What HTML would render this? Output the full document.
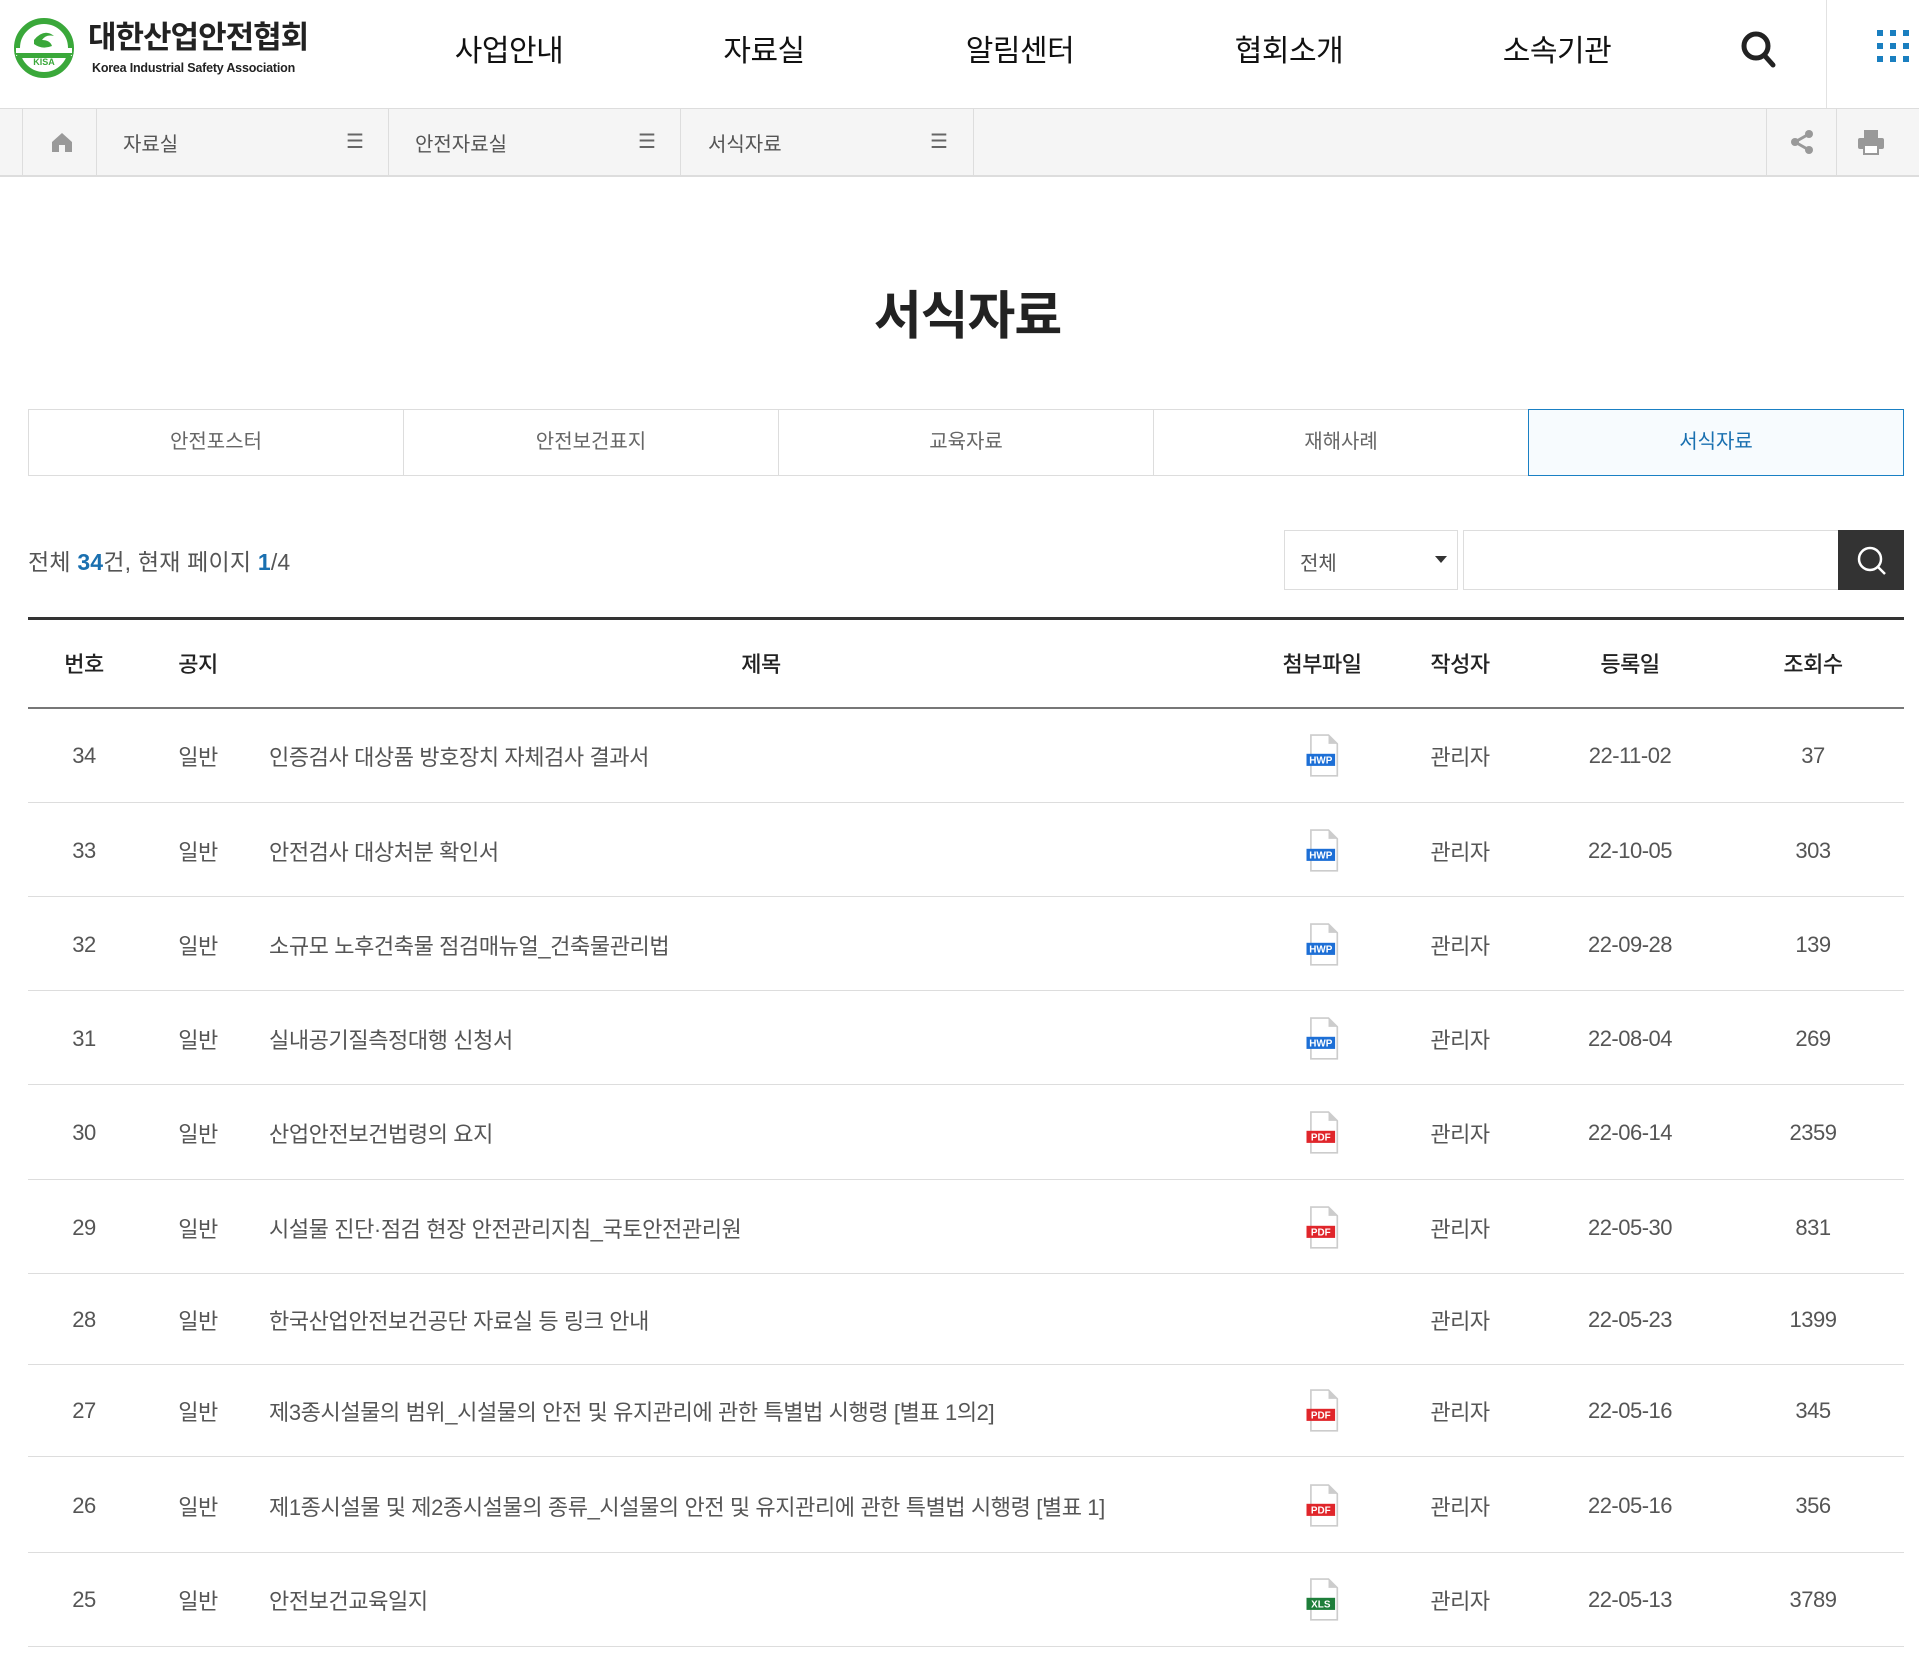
<!DOCTYPE html>
<html><head><meta charset="utf-8">
<style>
*{margin:0;padding:0;box-sizing:border-box}
body{width:1919px;height:1658px;background:#fff;font-family:"Liberation Sans","Noto Sans CJK KR",sans-serif;position:relative;overflow:hidden;color:#333}
.a{position:absolute}
.nav{font-size:30px;color:#111;top:26px;transform:translateX(-50%);letter-spacing:-0.5px}
.bc{top:108px;left:0;width:1919px;height:69px;background:#f5f5f5;border-top:1px solid #ddd;border-bottom:2px solid #ddd}
.vl{position:absolute;top:0;width:1px;height:67px;background:#ddd}
.bct{position:absolute;top:19px;font-size:20px;color:#555}
.ham{position:absolute;top:20px;font-size:20px;color:#666}
.tab{position:absolute;top:409px;height:67px;border:1px solid #ddd;font-size:20px;color:#666;text-align:center;line-height:65px;background:#fff}
.c{position:absolute;transform:translate(-50%,-50%);font-size:22px;color:#555;white-space:nowrap;letter-spacing:-0.5px}
.h{color:#222;font-weight:500}
.t{position:absolute;transform:translateY(-50%);left:269px;font-size:22px;color:#555;white-space:nowrap;letter-spacing:-0.4px}
.rl{position:absolute;left:28px;width:1876px;height:1px;background:#ddd}
.ic{position:absolute;width:38px;height:44px;transform:translate(-50%,-50%)}
</style></head><body>
<svg class="a" style="left:12px;top:16px" width="64" height="64" viewBox="0 0 64 64">
<circle cx="32" cy="32" r="27" fill="none" stroke="#3aa83a" stroke-width="6"/>
<path d="M4 36 H60" stroke="#fff" stroke-width="8"/>
<path d="M2 37 L62 37 L56 42 L8 42Z" fill="#3aa83a"/>
<text x="32" y="49" font-size="9" font-weight="bold" fill="#3aa83a" text-anchor="middle" font-family="Liberation Sans">KISA</text>
<path d="M22 24 Q32 12 42 20 Q34 18 30 24 Q38 24 40 30 Q30 34 22 28Z" fill="#3aa83a"/>
</svg>
<div class="a" style="left:88px;top:20px;font-size:31px;font-weight:bold;color:#222;letter-spacing:-1px;line-height:36px">대한산업안전협회</div>
<div class="a" style="left:92px;top:61px;font-size:12.5px;font-weight:bold;color:#222;letter-spacing:-0.2px">Korea Industrial Safety Association</div>
<div class="a nav" style="left:509px">사업안내</div>
<div class="a nav" style="left:764px">자료실</div>
<div class="a nav" style="left:1020px">알림센터</div>
<div class="a nav" style="left:1289px">협회소개</div>
<div class="a nav" style="left:1557px">소속기관</div>
<svg class="a" style="left:1740px;top:30px" width="38" height="40" viewBox="0 0 38 40"><circle cx="16" cy="16" r="12" fill="none" stroke="#222" stroke-width="5"/><path d="M25 26 L33 35" stroke="#222" stroke-width="5" stroke-linecap="round"/></svg>
<div class="a" style="left:1826px;top:0;width:1px;height:108px;background:#e2e2e2"></div>
<svg class="a" style="left:1877px;top:30px" width="34" height="34" viewBox="0 0 34 34" fill="#1a7fc0">
<rect x="0" y="0" width="6" height="6"/><rect x="13" y="0" width="6" height="6"/><rect x="26" y="0" width="6" height="6"/>
<rect x="0" y="13" width="6" height="6"/><rect x="13" y="13" width="6" height="6"/><rect x="26" y="13" width="6" height="6"/>
<rect x="0" y="26" width="6" height="6"/><rect x="13" y="26" width="6" height="6"/><rect x="26" y="26" width="6" height="6"/></svg>
<div class="a bc">
<div class="vl" style="left:22px"></div><div class="vl" style="left:96px"></div><div class="vl" style="left:388px"></div><div class="vl" style="left:680px"></div><div class="vl" style="left:973px"></div>
<div class="vl" style="left:1766px"></div><div class="vl" style="left:1836px"></div>
<svg style="position:absolute;left:51px;top:23px" width="22" height="20" viewBox="0 0 22 20"><path d="M11 1 L21 10 V20 H14 V13 H8 V20 H1 V10Z" fill="#999"/></svg>
<div class="bct" style="left:123px">자료실</div><div class="ham" style="left:346px">☰</div>
<div class="bct" style="left:415px">안전자료실</div><div class="ham" style="left:638px">☰</div>
<div class="bct" style="left:708px">서식자료</div><div class="ham" style="left:930px">☰</div>
<svg style="position:absolute;left:1789px;top:20px" width="26" height="26" viewBox="0 0 26 26" fill="#999"><circle cx="20" cy="5" r="4"/><circle cx="6" cy="13" r="4"/><circle cx="20" cy="21" r="4"/><path d="M6 13 L20 5 M6 13 L20 21" stroke="#999" stroke-width="3"/></svg>
<svg style="position:absolute;left:1857px;top:20px" width="28" height="26" viewBox="0 0 28 26" fill="#999"><rect x="7" y="1" width="14" height="8"/><rect x="1" y="9" width="26" height="11" rx="2"/><rect x="7" y="16" width="14" height="9" fill="#fff" stroke="#999" stroke-width="2"/></svg>
</div>
<div class="a" style="left:8px;width:1919px;top:274px;text-align:center;font-size:52px;font-weight:bold;color:#222;letter-spacing:-1px">서식자료</div>
<div class="tab" style="left:28px;width:376px">안전포스터</div>
<div class="tab" style="left:403px;width:376px">안전보건표지</div>
<div class="tab" style="left:778px;width:376px">교육자료</div>
<div class="tab" style="left:1153px;width:376px">재해사례</div>
<div class="tab" style="left:1528px;width:376px;border-color:#1a80c4;color:#1a70b0;background:#f7fbfe">서식자료</div>
<div class="a" style="left:28px;top:543px;font-size:23px;color:#555;letter-spacing:0.2px">전체 <b style="color:#1a70b0">34</b>건, 현재 페이지 <b style="color:#1a70b0">1</b>/4</div>
<div class="a" style="left:1284px;top:530px;width:174px;height:60px;border:1px solid #ddd"><span style="position:absolute;left:15px;top:16px;font-size:20px;color:#555">전체</span><span style="position:absolute;right:10px;top:25px;border-left:6px solid transparent;border-right:6px solid transparent;border-top:7px solid #333"></span></div>
<div class="a" style="left:1463px;top:530px;width:376px;height:60px;border:1px solid #ddd"></div>
<div class="a" style="left:1838px;top:530px;width:66px;height:60px;background:#333"><svg style="position:absolute;left:18px;top:15px" width="32" height="32" viewBox="0 0 32 32"><circle cx="14" cy="14" r="11" fill="none" stroke="#fff" stroke-width="2.5"/><path d="M22 22 L29 29" stroke="#fff" stroke-width="2.5"/></svg></div>
<div class="a" style="left:28px;top:617px;width:1876px;height:3px;background:#333"></div>
<div class="c h" style="left:84px;top:663px">번호</div>
<div class="c h" style="left:198px;top:663px">공지</div>
<div class="c h" style="left:761px;top:663px">제목</div>
<div class="c h" style="left:1322px;top:663px">첨부파일</div>
<div class="c h" style="left:1460px;top:663px">작성자</div>
<div class="c h" style="left:1630px;top:663px">등록일</div>
<div class="c h" style="left:1813px;top:663px">조회수</div>
<div class="a" style="left:28px;top:707px;width:1876px;height:2px;background:#777"></div>
<div class="rl" style="top:802px"></div><div class="rl" style="top:896px"></div><div class="rl" style="top:990px"></div><div class="rl" style="top:1084px"></div><div class="rl" style="top:1179px"></div><div class="rl" style="top:1273px"></div><div class="rl" style="top:1364px"></div><div class="rl" style="top:1456px"></div><div class="rl" style="top:1552px"></div><div class="rl" style="top:1646px"></div>
<div class="c" style="left:84px;top:756px">34</div><div class="c" style="left:198px;top:756px">일반</div><div class="t" style="top:756px">인증검사 대상품 방호장치 자체검사 결과서</div><div class="c" style="left:1460px;top:756px">관리자</div><div class="c" style="left:1630px;top:756px">22-11-02</div><div class="c" style="left:1813px;top:756px">37</div>
<div class="c" style="left:84px;top:851px">33</div><div class="c" style="left:198px;top:851px">일반</div><div class="t" style="top:851px">안전검사 대상처분 확인서</div><div class="c" style="left:1460px;top:851px">관리자</div><div class="c" style="left:1630px;top:851px">22-10-05</div><div class="c" style="left:1813px;top:851px">303</div>
<div class="c" style="left:84px;top:945px">32</div><div class="c" style="left:198px;top:945px">일반</div><div class="t" style="top:945px">소규모 노후건축물 점검매뉴얼_건축물관리법</div><div class="c" style="left:1460px;top:945px">관리자</div><div class="c" style="left:1630px;top:945px">22-09-28</div><div class="c" style="left:1813px;top:945px">139</div>
<div class="c" style="left:84px;top:1039px">31</div><div class="c" style="left:198px;top:1039px">일반</div><div class="t" style="top:1039px">실내공기질측정대행 신청서</div><div class="c" style="left:1460px;top:1039px">관리자</div><div class="c" style="left:1630px;top:1039px">22-08-04</div><div class="c" style="left:1813px;top:1039px">269</div>
<div class="c" style="left:84px;top:1133px">30</div><div class="c" style="left:198px;top:1133px">일반</div><div class="t" style="top:1133px">산업안전보건법령의 요지</div><div class="c" style="left:1460px;top:1133px">관리자</div><div class="c" style="left:1630px;top:1133px">22-06-14</div><div class="c" style="left:1813px;top:1133px">2359</div>
<div class="c" style="left:84px;top:1228px">29</div><div class="c" style="left:198px;top:1228px">일반</div><div class="t" style="top:1228px">시설물 진단·점검 현장 안전관리지침_국토안전관리원</div><div class="c" style="left:1460px;top:1228px">관리자</div><div class="c" style="left:1630px;top:1228px">22-05-30</div><div class="c" style="left:1813px;top:1228px">831</div>
<div class="c" style="left:84px;top:1320px">28</div><div class="c" style="left:198px;top:1320px">일반</div><div class="t" style="top:1320px">한국산업안전보건공단 자료실 등 링크 안내</div><div class="c" style="left:1460px;top:1320px">관리자</div><div class="c" style="left:1630px;top:1320px">22-05-23</div><div class="c" style="left:1813px;top:1320px">1399</div>
<div class="c" style="left:84px;top:1411px">27</div><div class="c" style="left:198px;top:1411px">일반</div><div class="t" style="top:1411px">제3종시설물의 범위_시설물의 안전 및 유지관리에 관한 특별법 시행령 [별표 1의2]</div><div class="c" style="left:1460px;top:1411px">관리자</div><div class="c" style="left:1630px;top:1411px">22-05-16</div><div class="c" style="left:1813px;top:1411px">345</div>
<div class="c" style="left:84px;top:1506px">26</div><div class="c" style="left:198px;top:1506px">일반</div><div class="t" style="top:1506px">제1종시설물 및 제2종시설물의 종류_시설물의 안전 및 유지관리에 관한 특별법 시행령 [별표 1]</div><div class="c" style="left:1460px;top:1506px">관리자</div><div class="c" style="left:1630px;top:1506px">22-05-16</div><div class="c" style="left:1813px;top:1506px">356</div>
<div class="c" style="left:84px;top:1600px">25</div><div class="c" style="left:198px;top:1600px">일반</div><div class="t" style="top:1600px">안전보건교육일지</div><div class="c" style="left:1460px;top:1600px">관리자</div><div class="c" style="left:1630px;top:1600px">22-05-13</div><div class="c" style="left:1813px;top:1600px">3789</div>
<svg width="0" height="0" style="position:absolute"><defs>
<g id="doc"><path d="M6 1 H22 L30 9 V38 H6Z" fill="#fff" stroke="#ccc" stroke-width="1.5"/><path d="M22 1 V9 H30Z" fill="#ccc"/></g></defs></svg>
<svg class="ic" style="left:1323px;top:756px" viewBox="0 0 34 40"><use href="#doc"/><rect x="2" y="18" width="26" height="11" fill="#1d6fd6"/><text x="15" y="27" font-size="9" font-weight="bold" fill="#fff" text-anchor="middle" font-family="Liberation Sans">HWP</text></svg>
<svg class="ic" style="left:1323px;top:851px" viewBox="0 0 34 40"><use href="#doc"/><rect x="2" y="18" width="26" height="11" fill="#1d6fd6"/><text x="15" y="27" font-size="9" font-weight="bold" fill="#fff" text-anchor="middle" font-family="Liberation Sans">HWP</text></svg>
<svg class="ic" style="left:1323px;top:945px" viewBox="0 0 34 40"><use href="#doc"/><rect x="2" y="18" width="26" height="11" fill="#1d6fd6"/><text x="15" y="27" font-size="9" font-weight="bold" fill="#fff" text-anchor="middle" font-family="Liberation Sans">HWP</text></svg>
<svg class="ic" style="left:1323px;top:1039px" viewBox="0 0 34 40"><use href="#doc"/><rect x="2" y="18" width="26" height="11" fill="#1d6fd6"/><text x="15" y="27" font-size="9" font-weight="bold" fill="#fff" text-anchor="middle" font-family="Liberation Sans">HWP</text></svg>
<svg class="ic" style="left:1323px;top:1133px" viewBox="0 0 34 40"><use href="#doc"/><rect x="2" y="18" width="26" height="11" fill="#e0262b"/><text x="15" y="27" font-size="9" font-weight="bold" fill="#fff" text-anchor="middle" font-family="Liberation Sans">PDF</text></svg>
<svg class="ic" style="left:1323px;top:1228px" viewBox="0 0 34 40"><use href="#doc"/><rect x="2" y="18" width="26" height="11" fill="#e0262b"/><text x="15" y="27" font-size="9" font-weight="bold" fill="#fff" text-anchor="middle" font-family="Liberation Sans">PDF</text></svg>
<svg class="ic" style="left:1323px;top:1411px" viewBox="0 0 34 40"><use href="#doc"/><rect x="2" y="18" width="26" height="11" fill="#e0262b"/><text x="15" y="27" font-size="9" font-weight="bold" fill="#fff" text-anchor="middle" font-family="Liberation Sans">PDF</text></svg>
<svg class="ic" style="left:1323px;top:1506px" viewBox="0 0 34 40"><use href="#doc"/><rect x="2" y="18" width="26" height="11" fill="#e0262b"/><text x="15" y="27" font-size="9" font-weight="bold" fill="#fff" text-anchor="middle" font-family="Liberation Sans">PDF</text></svg>
<svg class="ic" style="left:1323px;top:1600px" viewBox="0 0 34 40"><use href="#doc"/><rect x="2" y="18" width="26" height="11" fill="#1e7e3a"/><text x="15" y="27" font-size="9" font-weight="bold" fill="#fff" text-anchor="middle" font-family="Liberation Sans">XLS</text></svg>
</body></html>
